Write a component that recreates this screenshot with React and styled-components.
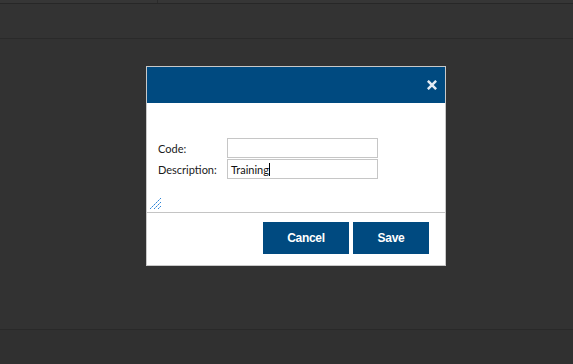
import React from "react";
import styled, { createGlobalStyle } from "styled-components";

const Global = createGlobalStyle`
  html, body { margin: 0; padding: 0; }
  body { background: #333333; font-family: "Lato", "Open Sans", sans-serif; }
  #root { width: 573px; height: 364px; }
`;

const Page = styled.div`
  position: relative;
  width: 573px;
  height: 364px;
  display: flex;
  flex-direction: column;
  background: #333333;
  overflow: hidden;
`;

const TopStrip = styled.div`
  height: 3px;
  background: #363636;
  border-bottom: 1px solid #272727;
  display: flex;
  padding-left: 157px;
`;

const Tick = styled.div`
  width: 1px;
  height: 3px;
  background: #2b2b2b;
`;

const Toolbar = styled.div`
  height: 34px;
  background: #333333;
  border-bottom: 1px solid #2a2a2a;
`;

const Content = styled.div`
  flex: 1;
  background: #323232;
`;

const Footer = styled.div`
  height: 34px;
  background: #303030;
  border-top: 1px solid #292929;
`;

const Dialog = styled.div`
  position: absolute;
  left: 146px;
  top: 66px;
  width: 300px;
  height: 200px;
  box-sizing: border-box;
  border: 1px solid #c8c8c8;
  background: #ffffff;
  display: flex;
  flex-direction: column;
`;

const Header = styled.div`
  height: 36px;
  background: #004a80;
  display: flex;
  align-items: center;
  justify-content: flex-end;
  padding-right: 8px;
`;

const CloseButton = styled.button`
  width: 10px;
  height: 10px;
  padding: 0;
  margin: 0;
  border: 0;
  background: transparent;
  display: flex;
  align-items: center;
  justify-content: center;
  cursor: pointer;
  svg { display: block; }
`;

const Body = styled.div`
  height: 109px;
  box-sizing: border-box;
  padding: 35px 0 2px 3px;
  display: flex;
  flex-direction: column;
`;

const Form = styled.div`
  display: flex;
  flex-direction: column;
  gap: 1px;
  padding-left: 8px;
`;

const Row = styled.div`
  display: flex;
  align-items: center;
`;

const Label = styled.label`
  width: 69px;
  font-size: 11px;
  color: #1a1a1a;
`;

const Input = styled.input`
  width: 151px;
  height: 20px;
  box-sizing: border-box;
  border: 1px solid #c6c6c6;
  padding: 0 3px;
  margin: 0;
  font-family: "Lato", "Open Sans", sans-serif;
  font-size: 11px;
  color: #111;
  outline: none;
  background: #fff;
`;

const Caret = styled.span`
  display: inline-block;
  width: 1px;
  height: 13px;
  background: #000;
`;

const FakeInput = styled.div`
  width: 151px;
  height: 20px;
  box-sizing: border-box;
  border: 1px solid #c6c6c6;
  padding: 0 3px;
  font-size: 11px;
  color: #111;
  display: flex;
  align-items: center;
`;

const Grip = styled.div`
  margin-top: auto;
  width: 12px;
  height: 12px;
  svg { display: block; }
`;

const Separator = styled.div`
  height: 1px;
  background: #c4c4c4;
`;

const Actions = styled.div`
  flex: 1;
  display: flex;
  justify-content: flex-end;
  align-items: flex-start;
  gap: 4px;
  padding: 9px 16px 0 0;
`;

const Button = styled.button`
  width: ${(p) => p.$w}px;
  height: 32px;
  border: 0;
  margin: 0;
  padding: 0;
  background: #004a80;
  color: #ffffff;
  font-family: "Liberation Sans", Arial, sans-serif;
  font-weight: bold;
  font-size: 12px;
  letter-spacing: -0.3px;
  cursor: pointer;
`;

const gripDots = [];
[[0, 11, 11], [4, 11, 7], [8, 11, 3]].forEach(([x0, y0, n]) => {
  for (let i = 0; i < n; i += 1) {
    gripDots.push([x0 + i, y0 - i - 1, i % 2 === 0]);
  }
});

export default function App() {
  return (
    <>
      <Global />
      <Page>
        <TopStrip>
          <Tick />
        </TopStrip>
        <Toolbar />
        <Content />
        <Footer />
        <Dialog>
          <Header>
            <CloseButton aria-label="close">
              <svg width="10" height="10" viewBox="0 0 10 10">
                <path d="M1.7 1.7 L8.3 8.3 M8.3 1.7 L1.7 8.3" stroke="#e4ebf3" strokeWidth="2.5" strokeLinecap="square" />
              </svg>
            </CloseButton>
          </Header>
          <Body>
            <Form>
              <Row>
                <Label>Code:</Label>
                <Input defaultValue="" />
              </Row>
              <Row>
                <Label>Description:</Label>
                <FakeInput>
                  Training
                  <Caret />
                </FakeInput>
              </Row>
            </Form>
            <Grip>
              <svg width="12" height="12" viewBox="0 0 12 12" shapeRendering="crispEdges">
                {gripDots.map(([x, y, dark]) => (
                  <rect key={`${x}-${y}`} x={x} y={y} width="1" height="1" fill={dark ? "#2f84d6" : "#8fbfee"} />
                ))}
              </svg>
            </Grip>
          </Body>
          <Separator />
          <Actions>
            <Button $w={86}>Cancel</Button>
            <Button $w={76}>Save</Button>
          </Actions>
        </Dialog>
      </Page>
    </>
  );
}
